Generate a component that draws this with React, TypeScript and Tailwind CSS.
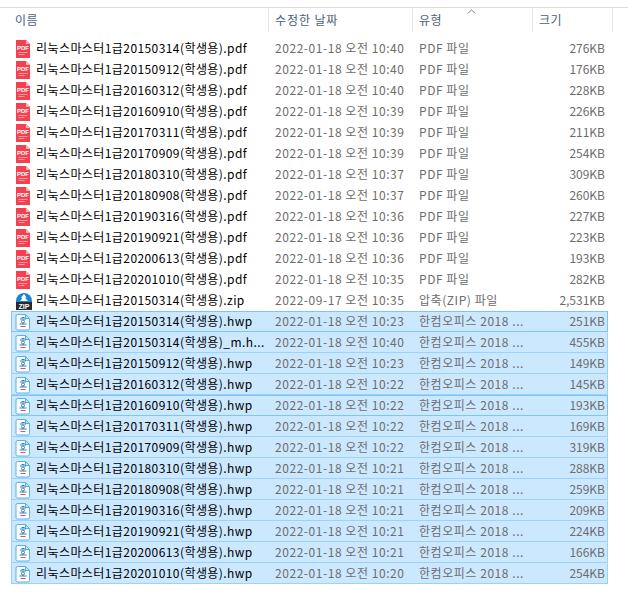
const pdfNames = [
  ["20150314", "276KB", "10:40"],
  ["20150912", "176KB", "10:40"],
  ["20160312", "228KB", "10:40"],
  ["20160910", "226KB", "10:39"],
  ["20170311", "211KB", "10:39"],
  ["20170909", "254KB", "10:39"],
  ["20180310", "309KB", "10:37"],
  ["20180908", "260KB", "10:37"],
  ["20190316", "227KB", "10:36"],
  ["20190921", "223KB", "10:36"],
  ["20200613", "193KB", "10:36"],
  ["20201010", "282KB", "10:35"],
];

const hwpFiles = [
  { name: "리눅스마스터1급20150314(학생용).hwp", time: "10:23", size: "251KB", focus: true },
  { name: "리눅스마스터1급20150314(학생용)_m.h...", time: "10:40", size: "455KB" },
  { name: "리눅스마스터1급20150912(학생용).hwp", time: "10:23", size: "149KB" },
  { name: "리눅스마스터1급20160312(학생용).hwp", time: "10:22", size: "145KB" },
  { name: "리눅스마스터1급20160910(학생용).hwp", time: "10:22", size: "193KB", focus: true },
  { name: "리눅스마스터1급20170311(학생용).hwp", time: "10:22", size: "169KB" },
  { name: "리눅스마스터1급20170909(학생용).hwp", time: "10:22", size: "319KB" },
  { name: "리눅스마스터1급20180310(학생용).hwp", time: "10:21", size: "288KB" },
  { name: "리눅스마스터1급20180908(학생용).hwp", time: "10:21", size: "259KB" },
  { name: "리눅스마스터1급20190316(학생용).hwp", time: "10:21", size: "209KB" },
  { name: "리눅스마스터1급20190921(학생용).hwp", time: "10:21", size: "224KB" },
  { name: "리눅스마스터1급20200613(학생용).hwp", time: "10:21", size: "166KB" },
  { name: "리눅스마스터1급20201010(학생용).hwp", time: "10:20", size: "254KB" },
];

const PdfIcon = () => (
  <svg width="16" height="18" viewBox="0 0 16 18">
    <path d="M1 0h10l4 4v14H1z" fill="#f4404f" />
    <path d="M11 0l4 4h-4z" fill="#fbb3b9" />
    <text x="8" y="10" textAnchor="middle" fontSize="6" fontWeight="700" fill="#fff" fontFamily="Liberation Sans, sans-serif">PDF</text>
    <path d="M3.500 12.500h9M3.500 14.500h6" stroke="#fa9aa3" strokeWidth="1" />
  </svg>
);

const ZipIcon = () => (
  <svg width="18" height="18" viewBox="0 0 18 18">
    <path d="M1 10V9a8 8 0 0 1 16 0v1z" fill="#1e82d2" />
    <path d="M9 2l2.500 3.500-1.500.2L13 9H5l2.500-3-1.500-.2z" fill="#fff" />
    <rect x="1" y="10" width="16" height="8" fill="#26282c" />
    <text x="9" y="16.500" textAnchor="middle" fontSize="7" fontWeight="700" fill="#fff" fontFamily="Liberation Sans, sans-serif">ZIP</text>
  </svg>
);

const HwpIcon = () => (
  <svg width="16" height="18" viewBox="0 0 16 18">
    <path d="M2.500 1.500h8l4 4v10a1.500 1.500 0 0 1-1.500 1.500H2.500A1.500 1.500 0 0 1 1 15.500V3a1.500 1.500 0 0 1 1.500-1.500z" fill="#fff" stroke="#52b2ea" />
    <path d="M10.500 1.500v4h4z" fill="#bfe3f8" stroke="#52b2ea" />
    <path d="M6.500 4.500h3M5 6h6" stroke="#2f7fb8" strokeWidth="1" />
    <circle cx="8" cy="8.500" r="1.500" fill="none" stroke="#2f7fb8" />
    <path d="M4.500 11h7M8 10v1" stroke="#2f7fb8" strokeWidth="1" fill="none" />
    <path d="M5.500 13.500h5" stroke="#e2525c" strokeWidth="1" />
  </svg>
);

const Row = ({
  icon,
  name,
  date,
  type,
  size,
  selected,
  focus,
}: {
  icon: React.ReactNode;
  name: string;
  date: string;
  type: string;
  size: string;
  selected?: boolean;
  focus?: boolean;
}) => (
  <div
    className={
      "flex h-[21px] items-center border " +
      (focus
        ? "border-[#7cc4fa] bg-[#cce8ff]"
        : selected
          ? "border-x-[#99d1ff] border-t-[#cce8ff] border-b-[#99d1ff] bg-[#cce8ff]"
          : "border-transparent")
    }
  >
    <div className="flex w-[252px] items-center pl-[3px]">
      <span className="flex w-[21px] shrink-0 items-center justify-start">{icon}</span>
      <span className="whitespace-nowrap pb-[2px] tracking-[0.42px] text-black">{name}</span>
    </div>
    <div className="w-[144px] whitespace-nowrap pb-[2px] pl-[11px] tracking-[0.55px] text-[#6d6d6d]">{date}</div>
    <div className="w-[102px] whitespace-nowrap pb-[2px] pl-[11px] tracking-[0.55px] text-[#6d6d6d]">{type}</div>
    <div className="w-[97px] pb-[2px] pr-[2px] text-right text-[#6d6d6d]">{size}</div>
  </div>
);

const App = () => {
  return (
    <div
      className="h-[606px] w-[628px] overflow-hidden bg-white pt-[7px] text-[12px] leading-none"
      style={{ fontFamily: '"Noto Sans CJK KR", "Liberation Sans", sans-serif' }}
    >
      <div className="relative flex h-[25px] border-t border-[#dcdcdc] text-[#4c607a]">
        <div className="w-[269px] border-r border-[#e5e5e5] pl-[15px] pt-[6px] tracking-[0.5px]">이름</div>
        <div className="w-[144px] border-r border-[#e5e5e5] pl-[6px] pt-[6px] tracking-[0.9px]">수정한 날짜</div>
        <div className="w-[120px] border-r border-[#e5e5e5] pl-[6px] pt-[6px] tracking-[0.5px]">유형</div>
        <div className="w-[80px] border-r border-[#e5e5e5] pl-[6px] pt-[6px] tracking-[0.5px]">크기</div>
        <svg className="absolute left-[467px] top-[1px]" width="9" height="5" viewBox="0 0 9 5">
          <path d="M.5 4.500l4-3.500 4 3.500" fill="none" stroke="#8a8a8a" />
        </svg>
      </div>
      <div className="ml-[11px] mt-[6px] w-[597px]">
        {pdfNames.map(([n, size, time]) => (
          <Row
            key={n}
            icon={<PdfIcon />}
            name={`리눅스마스터1급${n}(학생용).pdf`}
            date={`2022-01-18 오전 ${time}`}
            type="PDF 파일"
            size={size}
          />
        ))}
        <Row
          icon={<ZipIcon />}
          name="리눅스마스터1급20150314(학생용).zip"
          date="2022-09-17 오전 10:35"
          type="압축(ZIP) 파일"
          size="2,531KB"
        />
        {hwpFiles.map((f) => (
          <Row
            key={f.name}
            icon={<HwpIcon />}
            name={f.name}
            date={`2022-01-18 오전 ${f.time}`}
            type="한컴오피스 2018 ..."
            size={f.size}
            selected
            focus={f.focus}
          />
        ))}
      </div>
    </div>
  );
};

export default App;
